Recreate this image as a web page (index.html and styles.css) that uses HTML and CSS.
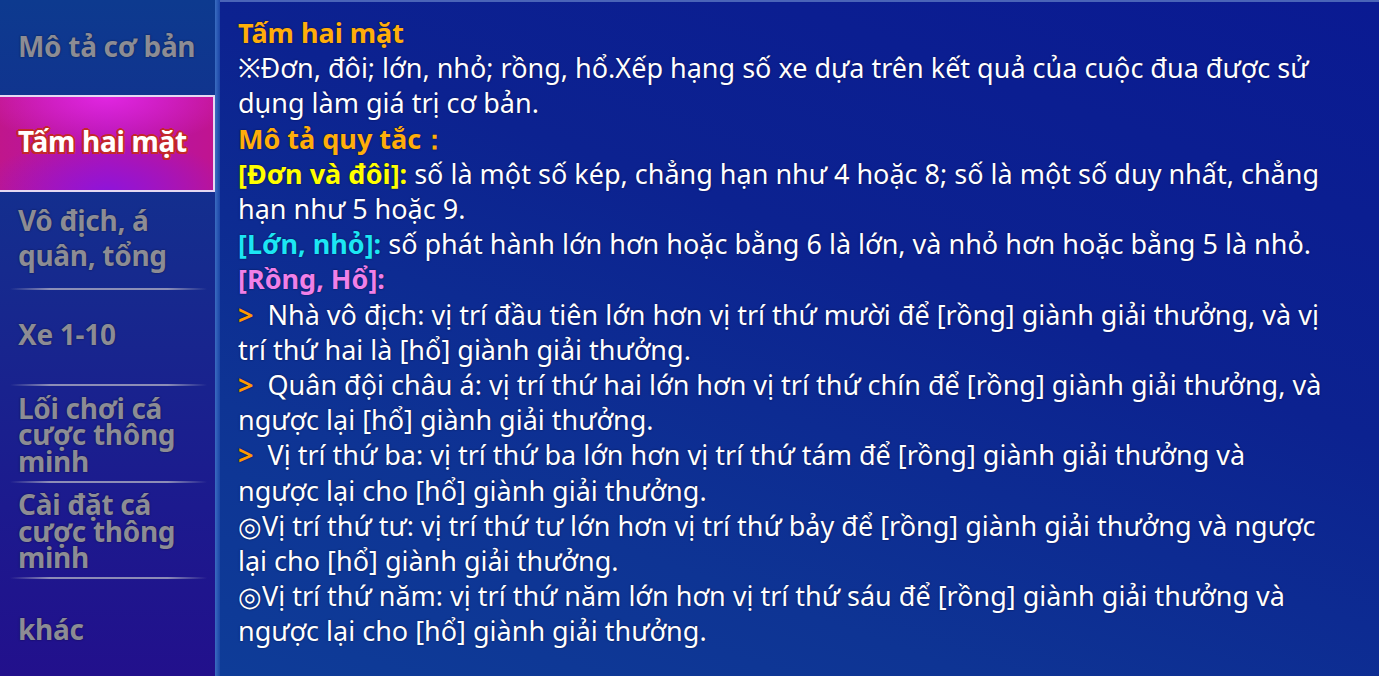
FILE: index.html
```html
<!DOCTYPE html>
<html lang="vi">
<head>
<meta charset="utf-8">
<title>Tấm hai mặt</title>
<link rel="stylesheet" href="styles.css">
</head>
<body>
<div class="app">
  <nav class="sidebar">
    <div class="tab first">Mô tả cơ bản</div>
    <div class="tab active">Tấm hai mặt</div>
    <div class="tab sep">Vô địch, á quân, tổng</div>
    <div class="tab sep">Xe 1-10</div>
    <div class="tab sep tight">Lối chơi cá cược thông minh</div>
    <div class="tab sep tight">Cài đặt cá cược thông minh</div>
    <div class="tab last">khác</div>
  </nav>
  <div class="divider"></div>
  <main class="content">
    <p class="title">Tấm hai mặt</p>
    <p>※Đơn, đôi; lớn, nhỏ; rồng, hổ.Xếp hạng số xe dựa trên kết quả của cuộc đua được sử dụng làm giá trị cơ bản.</p>
    <p class="title">Mô tả quy tắc：</p>
    <p><span class="yellow">[Đơn và đôi]:</span> số là một số kép, chẳng hạn như 4 hoặc 8; số là một số duy nhất, chẳng hạn như 5 hoặc 9.</p>
    <p><span class="cyan">[Lớn, nhỏ]:</span> số phát hành lớn hơn hoặc bằng 6 là lớn, và nhỏ hơn hoặc bằng 5 là nhỏ.</p>
    <p><span class="pink">[Rồng, Hổ]:</span></p>
    <p><span class="arrow">&gt;</span> Nhà vô địch: vị trí đầu tiên lớn hơn vị trí thứ mười để [rồng] giành giải thưởng, và vị trí thứ hai là [hổ] giành giải thưởng.</p>
    <p><span class="arrow">&gt;</span> Quân đội châu á: vị trí thứ hai lớn hơn vị trí thứ chín để [rồng] giành giải thưởng, và ngược lại [hổ] giành giải thưởng.</p>
    <p><span class="arrow">&gt;</span> Vị trí thứ ba: vị trí thứ ba lớn hơn vị trí thứ tám để [rồng] giành giải thưởng và ngược lại cho [hổ] giành giải thưởng.</p>
    <p>◎Vị trí thứ tư: vị trí thứ tư lớn hơn vị trí thứ bảy để [rồng] giành giải thưởng và ngược lại cho [hổ] giành giải thưởng.</p>
    <p>◎Vị trí thứ năm: vị trí thứ năm lớn hơn vị trí thứ sáu để [rồng] giành giải thưởng và ngược lại cho [hổ] giành giải thưởng.</p>
  </main>
</div>
</body>
</html>
```

FILE: styles.css
```css
* { box-sizing: border-box; }
html, body {
  margin: 0;
  padding: 0;
  width: 1379px;
  height: 676px;
  overflow: hidden;
  font-family: "Noto Sans", "Open Sans", sans-serif;
}
.app {
  display: flex;
  width: 1379px;
  height: 676px;
}
.sidebar {
  width: 215px;
  flex: none;
  display: flex;
  flex-direction: column;
  background: linear-gradient(180deg, #0d3a8f 0%, #162a8e 40%, #1c1a8e 75%, #22108c 100%);
}
.tab {
  height: 96.5px;
  display: flex;
  align-items: center;
  padding: 0 8px 4px 18px;
  color: #8c8c94;
  font-weight: 700;
  font-size: 28px;
  line-height: 35px;
  letter-spacing: -0.3px;
  text-shadow: 0 0 2px rgba(0, 0, 20, 0.6);
  position: relative;
}
.tab.first { height: 95px; padding-bottom: 2px; }
.tab.last { padding-bottom: 0; padding-top: 6px; }
.tab.tight { line-height: 26.5px; padding-top: 2px; padding-bottom: 0; }
.tab.sep::after {
  content: "";
  position: absolute;
  left: 10px;
  right: 8px;
  bottom: -1px;
  height: 2px;
  background: linear-gradient(90deg, rgba(150,150,180,0) 0%, rgba(160,160,190,0.85) 20%, rgba(160,160,190,0.85) 80%, rgba(150,150,180,0) 100%);
}
.tab.active {
  height: 97px;
  color: #ffffff;
  border: 2px solid #e4d8f2;
  border-left: none;
  padding-left: 18px;
  background:
    radial-gradient(ellipse 60% 55% at 50% 0%, rgba(230, 40, 230, 0.9), rgba(230, 40, 230, 0) 100%),
    radial-gradient(ellipse 60% 55% at 50% 100%, rgba(140, 20, 220, 0.9), rgba(140, 20, 220, 0) 100%),
    linear-gradient(90deg, #c0168c 0%, #b214b0 50%, #c01490 100%);
  text-shadow:
    -1.5px -1.5px 0 #c4282a, 1.5px -1.5px 0 #c4282a,
    -1.5px 1.5px 0 #c4282a, 1.5px 1.5px 0 #c4282a,
    0 2px 0 #c4282a, 0 -2px 0 #c4282a, 2px 0 0 #c4282a, -2px 0 0 #c4282a;
}
.divider {
  width: 5px;
  flex: none;
  background: linear-gradient(90deg, #3a6cc0 0%, #2a58b4 50%, #1a44a4 100%);
}
.content {
  flex: 1;
  padding: 13px 53px 0 18px;
  border-top: 2px solid #4a64b8;
  background:
    linear-gradient(200deg, #0a1a92 0%, #0c2290 40%, #0e3494 75%, #0e3c98 100%);
  color: #ffffff;
  font-size: 27px;
  line-height: 35.2px;
  text-shadow: 0 0 2px rgba(0, 0, 40, 0.7);
}
.content p { margin: 0; }
.title {
  color: #ffae0a;
  font-weight: 700;
}
.yellow { color: #ffff00; font-weight: 700; }
.cyan { color: #1ce6f4; font-weight: 700; }
.pink { color: #f080e8; font-weight: 700; }
.arrow { color: #ff9a00; font-weight: 700; margin-right: 7px; }
```
